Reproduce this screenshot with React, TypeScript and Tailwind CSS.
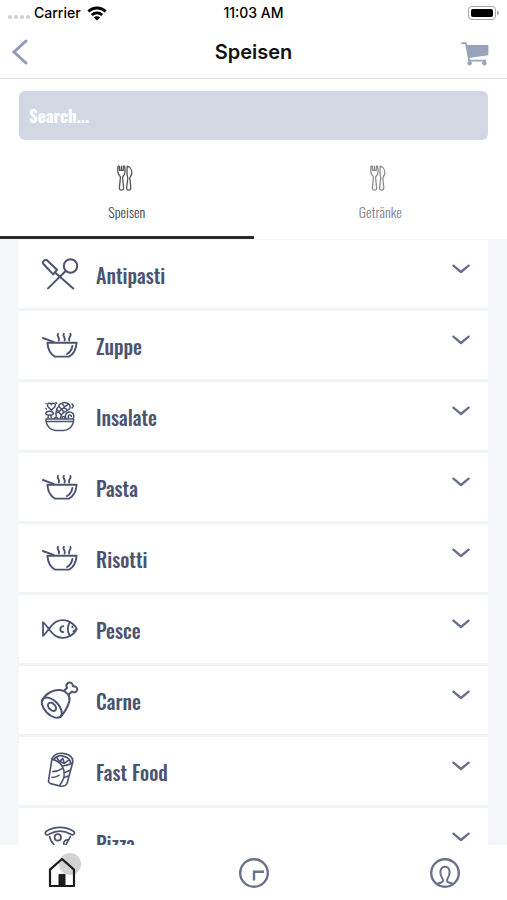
import React, { useState } from 'react';

interface IconProps {
  className?: string;
}

interface Category {
  name: string;
  icon: React.FC<IconProps>;
}

const lineIcon = {
  viewBox: '0 0 36 36',
  fill: 'none',
  stroke: 'currentColor',
  strokeWidth: 2,
  strokeLinecap: 'round' as const,
  strokeLinejoin: 'round' as const,
  'aria-hidden': true,
};

const CutleryIcon: React.FC<IconProps> = ({ className }) => (
  <svg {...lineIcon} className={className}>
    <circle cx="28.5" cy="9" r="6.7" />
    <path d="M23.7 14 L6 31.4" />
    <path d="M1.2 6.8 C0.4 4.2 2.4 2.2 5 3.2 L15 12.8 L11.2 17.4 Z" />
    <path d="M13 15.4 L31.3 31.4" />
  </svg>
);

const SoupIcon: React.FC<IconProps> = ({ className }) => (
  <svg {...lineIcon} strokeWidth={1.9} className={className}>
    <path d="M5.4 14.8 H34.6 C34 21.5 31 26.5 27 28.6 H13 C9 26.5 6 21.5 5.4 14.8 Z" />
    <path d="M0.8 10 L11.6 13.8" />
    <path d="M30.4 18 C29.8 21.6 28 24.4 25 26" />
    <path d="M16 5.8 C14.2 8 18.4 10 16.8 12.4 M21.8 5.8 C20 8 24.2 10 22.6 12.4 M28.4 5.8 C30 8 25.8 10 27.2 12.4" />
  </svg>
);

const SaladIcon: React.FC<IconProps> = ({ className }) => (
  <svg {...lineIcon} strokeWidth={1.5} className={className}>
    <path d="M4 20 H31.6 V22 C31 27.5 26.5 31.4 22 31.4 H13.6 C9 31.4 4.6 27.5 4 22 Z M4.4 22.6 H31.2" />
    <path d="M9.4 11.2 L6 7.8 C4 4.6 8 2.8 9.4 5.6 C10.8 2.8 15 4.6 12.8 7.8 Z" />
    <path d="M3.8 14.6 C4 11.6 11 11.6 11.4 14.6 C11 16.6 4.2 16.6 3.8 14.6 Z M6.4 16 L6 19 M8.8 16 L9.4 19" />
    <path d="M14.4 17 C12.6 14 15 12.6 14.6 10.4 C14.6 8.4 17 8.6 17 6.4 C17.4 4 20 5 21 3.8 C23 3 24.4 4.2 26 4.4 C28.6 5 27.6 7 28 8.4 C28 11 25.4 10.4 24.6 12 C22.8 13.4 21.4 12.6 20 15 L18.4 19" />
    <path d="M15 14 L26 5.4 M17 7.6 L21.6 12.4 M20.4 5 L24.6 10.6 M15 10.8 L18.8 15.4" />
    <path d="M24 19.6 C21.8 14.6 26.4 12.2 29.4 13.4 C32.6 14.6 32 18 31 19.6 M26.4 18.8 C25.6 16 28.8 14.8 29.4 17.6 M12.4 19.6 C13 17.4 15 17.4 15.6 19.6 M19.6 19.6 C20 16.8 22.2 16.8 23 19.4" />
    <path d="M30 5 L31.4 7 L30 9 M4 4.4 V4.6 M14 3.6 L14.6 4.2 M4 9.6 L4.4 10" />
  </svg>
);

const FishIcon: React.FC<IconProps> = ({ className }) => (
  <svg {...lineIcon} strokeWidth={1.8} className={className}>
    <path d="M1 10.2 C4 11.8 9 21.8 14.4 24.4 C22 28 31 24.4 34.8 17 C31 9.6 22 6 14.4 9.6 C9 12.2 4 22.2 1 23.8 Z" />
    <path d="M28 10 C25 14 25 20 28 24" />
    <path d="M21.4 14.2 C17.2 14.8 17.2 19.8 21.4 20.2" />
    <path d="M30.4 14.4 V15.4 M34 17.6 L31.4 19.4" />
  </svg>
);

const MeatIcon: React.FC<IconProps> = ({ className }) => (
  <svg {...lineIcon} className={`overflow-visible ${className}`}>
    <ellipse cx="9.8" cy="24.6" rx="12.4" ry="7" transform="rotate(46 9.8 24.6)" />
    <ellipse cx="10" cy="23.8" rx="4.8" ry="3.2" transform="rotate(46 10 23.8)" />
    <path d="M0.4 17 C4 10 12 6.4 18.4 7 C24.6 8 28.4 12.6 27.4 18 C26 24 22.6 29 18.8 34" />
    <path d="M22 7.8 L25 5 C23 1.4 26.6 -1.6 29.4 0 C31 1 30.6 2.6 31.2 3.4 C33 3.2 35.6 4 35.2 6.8 C34.8 9.4 31.6 10 30 8.6 L26.8 11.6" />
  </svg>
);

const WrapIcon: React.FC<IconProps> = ({ className }) => (
  <svg {...lineIcon} strokeWidth={1.6} className={`overflow-visible ${className}`}>
    <path d="M10 4.6 C12 0.4 17 -1.6 22.6 -0.4 C28 0.6 31.4 4 30.8 8 L25.2 29 C24.4 31.8 21 32.8 18 32 L8.6 29.6 C6.8 29 6.2 28 6.6 26 L10 4.6 Z" />
    <path d="M10 5.4 C14 6 18 9 20.2 12 C23 17 23.4 24 17.6 31.4" />
    <path d="M30.4 9 C27 11 23 12 20.4 12 M12 5 C15 1.4 19 1.2 22 2.4 C26 3.4 28.6 6 28.4 9.4" />
    <path d="M14.6 3.6 L17.6 7.6 L20.8 4.4 L22.4 9.4 L26.4 6.4 M17.6 7.6 L22.4 9.4" />
    <path d="M10.8 17.6 C14 17.6 17 16.6 20 14.6 M10 23.4 C12.4 23.6 15 22.6 17 21.4 M23 18.4 L27.4 16.4 M22.4 23.6 L26 22" />
  </svg>
);

const PizzaIcon: React.FC<IconProps> = ({ className }) => (
  <svg {...lineIcon} strokeWidth={1.7} className={className}>
    <path d="M4 9.4 C3 8.4 3 7 4.4 6.2 C12.4 1 23.4 1 31.4 6.2 C32.8 7 32.8 8.4 31.6 9.4 C30.8 10.2 29.8 9.8 28.8 9.2 C22 5.4 14 5.4 7 9.2 C6 9.8 4.8 10.2 4 9.4 Z" />
    <path d="M7.6 11.6 C8 15 9.6 17 11.6 19 L18 34 L24.6 18.4 L28.4 11.6" />
    <circle cx="15.8" cy="12.4" r="3.2" />
    <path d="M26.4 15 C23.4 14.4 21 16.4 22 19.4" />
  </svg>
);

const ForkKnifeIcon: React.FC<IconProps> = ({ className }) => (
  <svg
    viewBox="0 0 16 26"
    fill="none"
    stroke="currentColor"
    strokeWidth="1.3"
    strokeLinecap="round"
    strokeLinejoin="round"
    aria-hidden="true"
    className={className}
  >
    <path d="M1 1.4 C0.6 4.6 0.6 7.6 1.6 9.4 C2.4 10.8 3.6 11.2 3.4 12.6 L2.4 22.8 C2.2 26 6.8 26 6.6 22.8 L5.6 12.6 C5.4 11.2 6.8 10.8 7.4 9.4 C8.2 7.6 8.2 4.6 7.6 1.4 C7 0.6 6.4 0.8 6.4 1.6 L6.2 5.4 M1 1.4 C1.6 0.6 2.2 0.8 2.4 1.6 L2.6 5.4 H6.2 M4.4 1.2 V5" />
    <path d="M10.2 1.2 C13.6 2 15 5.6 14.8 8.4 C14.6 10.6 13 11.4 12.8 13.2 L13.8 22.8 C13.8 26 9.4 26 9.6 22.8 L10.8 13.2 C10.4 11.4 10 9.8 10 8 Z" />
  </svg>
);

const CartIcon: React.FC<IconProps> = ({ className }) => (
  <svg viewBox="0 0 28 24" fill="none" stroke="currentColor" strokeWidth="1.7" aria-hidden="true" className={className}>
    <path d="M0.4 1.2 H4.8 L8.2 18.6 H25" />
    <path d="M5.4 3 H27.4 V13.2 L7.8 16 Z" fill="currentColor" stroke="none" />
    <circle cx="8.6" cy="21.2" r="2.2" fill="currentColor" stroke="none" />
    <circle cx="23.4" cy="21.2" r="2.2" fill="currentColor" stroke="none" />
  </svg>
);

const WifiIcon: React.FC<IconProps> = ({ className }) => (
  <svg viewBox="0 0 20 15" fill="none" stroke="currentColor" strokeWidth="2.8" aria-hidden="true" className={className}>
    <path d="M1.4 5.6 C6.2 0.8 13.8 0.8 18.6 5.6" />
    <path d="M4.8 9 C7.8 6.2 12.2 6.2 15.2 9" />
    <path d="M10 14.6 L6.8 11.4 C8.6 9.8 11.4 9.8 13.2 11.4 Z" fill="currentColor" stroke="none" />
  </svg>
);

const ChevronDown: React.FC<IconProps> = ({ className }) => (
  <svg
    viewBox="0 0 18 10"
    fill="none"
    stroke="currentColor"
    strokeWidth="2.3"
    strokeLinecap="round"
    strokeLinejoin="round"
    aria-hidden="true"
    className={className}
  >
    <path d="M1.4 1.6 L9 8 L16.6 1.6" />
  </svg>
);

const categories: Category[] = [
  { name: 'Antipasti', icon: CutleryIcon },
  { name: 'Zuppe', icon: SoupIcon },
  { name: 'Insalate', icon: SaladIcon },
  { name: 'Pasta', icon: SoupIcon },
  { name: 'Risotti', icon: SoupIcon },
  { name: 'Pesce', icon: FishIcon },
  { name: 'Carne', icon: MeatIcon },
  { name: 'Fast Food', icon: WrapIcon },
  { name: 'Pizza', icon: PizzaIcon },
];

const tabs = ['Speisen', 'Getränke'];

const StatusBar: React.FC = () => (
  <div className="grid grid-cols-3 items-center h-[26px] px-2 text-sm font-medium text-black">
    <div className="flex items-center">
      <div className="flex gap-[2px] pt-2 mr-1">
        {[0, 1, 2, 3].map((dot) => (
          <span key={dot} className="size-[4px] rounded-full bg-[#cfcfcf]" />
        ))}
      </div>
      <span>Carrier</span>
      <WifiIcon className="w-5 h-[15px] ml-[6px]" />
    </div>
    <span className="text-center">11:03 AM</span>
    <div className="flex items-center justify-end">
      <div className="w-7 h-[14px] p-[2px] rounded-[4px] border border-[#a5a5a5]">
        <div className="h-full rounded-[2px] bg-black" />
      </div>
      <span className="w-[2px] h-1 ml-px rounded-r-full bg-[#a5a5a5]" />
    </div>
  </div>
);

const App: React.FC = () => {
  const [activeTab, setActiveTab] = useState('Speisen');
  const [query, setQuery] = useState('');

  return (
    <div className="flex flex-col h-screen bg-white font-['Inter',sans-serif]">
      <header className="border-b border-[#dedede]">
        <StatusBar />
        <div className="grid grid-cols-3 items-center h-[52px] px-3">
          <button type="button" aria-label="Back" className="justify-self-start text-[#8f9bb8]">
            <svg viewBox="0 0 16 26" fill="none" stroke="currentColor" strokeWidth="3" strokeLinecap="round" className="w-4 h-[26px]">
              <path d="M14 2 L2 13 L14 24" />
            </svg>
          </button>
          <h1 className="text-center text-xl font-semibold text-[#111111]">Speisen</h1>
          <button type="button" aria-label="Cart" className="justify-self-end pt-1 pr-[6px] text-[#96a3bb]">
            <CartIcon className="w-7 h-6" />
          </button>
        </div>
      </header>

      <div className="px-[19px] pt-3">
        <input
          type="text"
          aria-label="Search"
          placeholder="Search..."
          value={query}
          onChange={(e) => setQuery(e.target.value)}
          className="block w-full h-[49px] px-[10px] rounded-md bg-[#d1d8e4] font-['Oswald','Roboto_Condensed',sans-serif] text-[17px] font-bold text-white placeholder:text-white outline-none"
        />
      </div>

      <div role="tablist" className="grid grid-cols-2 h-[99px] shrink-0 font-['Oswald','Roboto_Condensed',sans-serif]">
        {tabs.map((tab) => (
          <button
            key={tab}
            type="button"
            role="tab"
            aria-selected={activeTab === tab}
            onClick={() => setActiveTab(tab)}
            className={`flex flex-col items-center pt-[25px] border-b-3 text-sm/5 font-light ${
              activeTab === tab ? 'border-[#2b2b2e] text-[#3f475c]' : 'border-transparent text-[#7b8291]'
            }`}
          >
            <ForkKnifeIcon className={`w-4 h-[26px] mb-[11px] mr-1 ${activeTab === tab ? 'text-[#555555]' : 'text-[#8c8c8c]'}`} />
            {tab}
          </button>
        ))}
      </div>

      <main className="flex-1 min-h-0 overflow-y-auto [scrollbar-width:none] px-[19px] bg-[#f5f6fa]">
        <ul className="pt-px">
          {categories.map(({ name, icon: CategoryIcon }) => (
            <li key={name} className="pb-[3px] bg-[#f1f2f5]">
              <button type="button" className="flex items-center w-full h-[68px] pt-[2px] pl-[23px] pr-[18px] bg-white text-left text-[#4a5470]">
                <CategoryIcon className="size-9 shrink-0" />
                <span className="flex-1 pl-[18px] font-['Oswald','Roboto_Condensed',sans-serif] text-xl font-medium">
                  {name}
                </span>
                <ChevronDown className="w-[18px] h-[10px] mb-3 text-[#68718a]" />
              </button>
            </li>
          ))}
        </ul>
      </main>

      <nav className="flex items-center justify-between h-[55px] shrink-0 px-[46px] bg-white text-[#69718b]">
        <button type="button" aria-label="Home" className="relative size-8 text-[#1c1c1e]">
          <span className="absolute -top-1 left-[13px] size-[22px] rounded-full bg-[#d2d2d2]" />
          <svg viewBox="0 0 32 32" fill="none" stroke="currentColor" strokeWidth="2.2" strokeLinejoin="round" className="relative size-8">
            <path d="M4 12.6 L16 2 L28 12.6 V29 H4 Z" />
            <path d="M13 17.4 H19 V29 H13 Z" fill="currentColor" strokeWidth="1" />
          </svg>
        </button>
        <button type="button" aria-label="Orders" className="size-8">
          <svg viewBox="0 0 32 32" fill="none" stroke="currentColor" strokeWidth="2.4" className="size-8">
            <circle cx="16" cy="16" r="13.8" />
            <path d="M26 14.8 H16 V23.4" />
          </svg>
        </button>
        <button type="button" aria-label="Profile" className="size-8">
          <svg viewBox="0 0 32 32" fill="none" stroke="currentColor" strokeWidth="2.4" className="size-8">
            <circle cx="16" cy="16" r="13.8" />
            <path d="M8 27 C10 25.6 14.4 26 14 23.4 C13.8 20.6 11.4 20 11.4 15.6 C11.2 12 13 9.8 16 9.8 C19 9.8 20.8 12 20.6 15.6 C20.6 20 18.2 20.6 18 23.4 C17.6 26 22 25.6 24 27" strokeWidth="2" />
          </svg>
        </button>
      </nav>
    </div>
  );
};

export default App;
